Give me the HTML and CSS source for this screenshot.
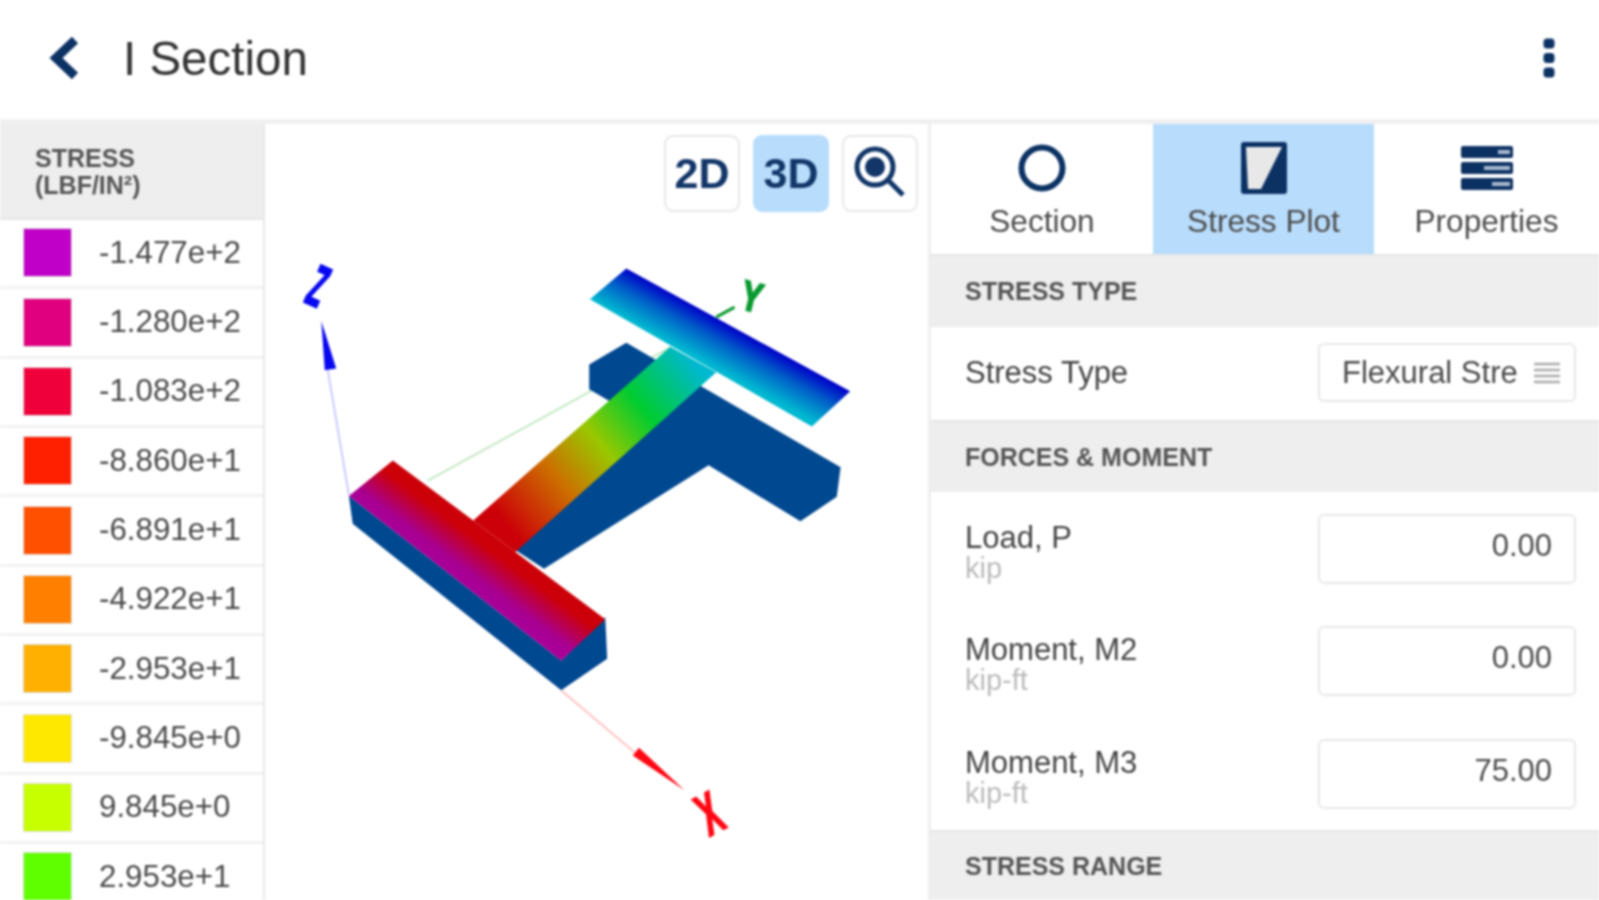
FILE: index.html
```html
<!DOCTYPE html>
<html lang="en">
<head>
<meta charset="utf-8">
<title>I Section</title>
<link rel="stylesheet" href="styles.css">
</head>
<body>
<div class="app">
  <header class="topbar">
    <svg class="back" viewBox="0 0 32 44"><path d="M26 4 L7 22 L26 40" /></svg>
    <h1 class="title">I Section</h1>
    <svg class="kebab" viewBox="0 0 14 40"><rect x="1.5" y="0.5" width="11" height="10" rx="3.5"/><rect x="1.5" y="15" width="11" height="10" rx="3.5"/><rect x="1.5" y="29.5" width="11" height="10" rx="3.5"/></svg>
  </header>
  <main class="body">
    <aside class="legend">
      <div class="legend-head">STRESS<br>(LBF/IN²)</div>
      <div class="legend-row"><span class="swatch c1"></span><span>-1.477e+2</span></div>
      <div class="legend-row"><span class="swatch c2"></span><span>-1.280e+2</span></div>
      <div class="legend-row"><span class="swatch c3"></span><span>-1.083e+2</span></div>
      <div class="legend-row"><span class="swatch c4"></span><span>-8.860e+1</span></div>
      <div class="legend-row"><span class="swatch c5"></span><span>-6.891e+1</span></div>
      <div class="legend-row"><span class="swatch c6"></span><span>-4.922e+1</span></div>
      <div class="legend-row"><span class="swatch c7"></span><span>-2.953e+1</span></div>
      <div class="legend-row"><span class="swatch c8"></span><span>-9.845e+0</span></div>
      <div class="legend-row"><span class="swatch c9"></span><span>9.845e+0</span></div>
      <div class="legend-row"><span class="swatch c10"></span><span>2.953e+1</span></div>
    </aside>
    <section class="stage">
      <div class="tools">
        <button class="tool">2D</button>
        <button class="tool active">3D</button>
        <button class="tool">
          <svg class="zoom-icon" viewBox="0 0 52 52"><circle cx="21" cy="21" r="18" class="ring"/><circle cx="21" cy="21" r="10" class="dot"/><path d="M33 33 L49 49" class="ring"/></svg>
        </button>
      </div>
      <svg class="model" viewBox="0 0 1568 1620" preserveAspectRatio="none">
        <defs>
          <linearGradient id="gFront" gradientUnits="userSpaceOnUse" x1="483" y1="866" x2="565" y2="753">
            <stop offset="0" stop-color="#a80098"/><stop offset=".2" stop-color="#a80090"/><stop offset=".75" stop-color="#cc0008"/>
          </linearGradient>
          <linearGradient id="gWeb" gradientUnits="userSpaceOnUse" x1="590" y1="720" x2="1080" y2="305">
            <stop offset="0" stop-color="#cc0008"/><stop offset=".28" stop-color="#cc7000"/><stop offset=".5" stop-color="#98c800"/><stop offset=".72" stop-color="#00cc30"/><stop offset="1" stop-color="#00b8d0"/>
          </linearGradient>
          <linearGradient id="gRear" gradientUnits="userSpaceOnUse" x1="1144" y1="326" x2="1197" y2="227">
            <stop offset="0" stop-color="#00b8d0"/><stop offset=".55" stop-color="#0060c8"/><stop offset="1" stop-color="#0000c8"/>
          </linearGradient>
        </defs>
        <path class="ax-z" d="M180 645 L125 330"/>
        <path class="ax-y" d="M385 610 L1020 272"/>
        <path class="ax-yd" d="M1140 195 L1188 170"/>
        <path class="ax-x" d="M735 1140 L930 1300"/>
        <polygon class="cone-z" points="108,205 117,330 147,325"/>
        <polygon class="cone-x" points="1056,1392 922,1305 938,1285"/>
        <text class="lbl lbl-z" transform="translate(60 155) rotate(24) scale(.52 1.15)">Z</text>
        <text class="lbl lbl-y" transform="translate(1198 172) rotate(14) scale(.8 1.05)">Y</text>
        <text class="lbl lbl-x" transform="translate(1122 1510) rotate(-27) scale(.62 1.15)">X</text>
        <polygon class="steel" points="808,315 905,260 1465,575 1455,650 1360,712 1120,570 690,832 615,785 865,410 808,378"/>
        <polygon class="steel" points="180,648 190,718 735,1140 855,1060 850,955 735,1065"/>
        <polygon fill="url(#gWeb)" points="505,710 1020,270 1140,335 615,790"/>
        <polygon fill="url(#gFront)" points="180,648 295,558 850,960 735,1065"/>
        <polygon fill="url(#gRear)" points="810,150 905,72 1490,383 1390,472"/>
      </svg>
    </section>
    <aside class="panel">
      <nav class="tabs">
        <div class="tab">
          <svg class="tab-icon" viewBox="0 0 54 54"><circle cx="27" cy="27" r="20.5" class="ic-ring"/></svg>
          <span>Section</span>
        </div>
        <div class="tab active">
          <svg class="tab-icon" viewBox="0 0 54 54"><rect x="4" y="1" width="46" height="52" rx="3" class="ic-fill"/><polygon points="9,6 45,6 24,48 11,48" class="ic-light"/></svg>
          <span>Stress Plot</span>
        </div>
        <div class="tab">
          <svg class="tab-icon" viewBox="0 0 54 54"><rect x="1" y="5" width="52" height="12" rx="2" class="ic-fill"/><rect x="1" y="21" width="52" height="12" rx="2" class="ic-fill"/><rect x="1" y="37" width="52" height="12" rx="2" class="ic-fill"/><rect x="38" y="9" width="12" height="4" class="ic-pale"/><rect x="24" y="25" width="26" height="4" class="ic-pale"/><rect x="32" y="41" width="18" height="4" class="ic-pale"/></svg>
          <span>Properties</span>
        </div>
      </nav>
      <div class="band b-type">STRESS TYPE</div>
      <div class="row row-type">
        <div class="row-label">Stress Type</div>
        <div class="field select"><span class="sel-text">Flexural Stre</span><svg class="sel-icon" viewBox="0 0 26 22"><path d="M0 2H26M0 8H26M0 14H26M0 20H26"/></svg></div>
      </div>
      <div class="band">FORCES &amp; MOMENT</div>
      <div class="row">
        <div class="row-label has-unit">Load, P<small>kip</small></div>
        <div class="field">0.00</div>
      </div>
      <div class="row">
        <div class="row-label has-unit">Moment, M2<small>kip-ft</small></div>
        <div class="field">0.00</div>
      </div>
      <div class="row">
        <div class="row-label has-unit">Moment, M3<small>kip-ft</small></div>
        <div class="field">75.00</div>
      </div>
      <div class="band">STRESS RANGE</div>
    </aside>
  </main>
</div>
</body>
</html>
```
FILE: styles.css
```css
* { box-sizing: border-box; }
html, body { margin: 0; height: 100%; overflow: hidden; background: #fff; }
body { font-family: "Liberation Sans", Arial, sans-serif; color: #444; }
.app { width: 1599px; height: 900px; display: flex; flex-direction: column; overflow: hidden; filter: blur(.8px); }

.topbar { height: 124px; flex: none; display: flex; align-items: center; border-bottom: 5px solid #f0f0f0; padding: 0 43px 3px 49px; }
.back { width: 32px; height: 44px; margin-right: 42px; }
.back path { fill: none; stroke: #0c3264; stroke-width: 9; }
.title { flex: 1; margin: 0; font-size: 47.5px; font-weight: 400; color: #333; }
.kebab { width: 14px; height: 40px; fill: #0c3264; }

.body { flex: 1; min-height: 0; display: flex; }

.legend { width: 265px; flex: none; border-right: 2px solid #e8e8e8; }
.legend-head { height: 96px; padding: 21px 0 0 35px; background: #eee; font-size: 25px; line-height: 27px; font-weight: 700; color: #555; border-bottom: 2px solid #e6e6e6; }
.legend-row { height: 69.35px; display: flex; align-items: center; padding: 0 0 1px 24px; gap: 28px; font-size: 31.3px; color: #4a4a4a; border-bottom: 3px solid #f2f2f2; }
.swatch { width: 47px; height: 47px; flex: none; box-shadow: 0 0 0 1px #ddd; }
.c1 { background: #c000c8; }
.c2 { background: #e0007f; }
.c3 { background: #f0003a; }
.c4 { background: #ff2000; }
.c5 { background: #ff5000; }
.c6 { background: #ff8000; }
.c7 { background: #ffb000; }
.c8 { background: #ffe800; }
.c9 { background: #c8ff00; }
.c10 { background: #60ff00; }

.stage { flex: 1; position: relative; min-width: 0; }
.tools { display: flex; justify-content: flex-end; gap: 13px; padding: 11px 10px 0 0; }
.tool { width: 76px; height: 77px; padding: 0; display: flex; align-items: center; justify-content: center; border: 2px solid #e8e8e8; border-radius: 9px; background: #fff; font: 700 43px "Liberation Sans", Arial, sans-serif; color: #123668; }
.tool.active { background: #b8dcfb; border-color: #b8dcfb; }
.zoom-icon { width: 52px; height: 52px; margin: -3px 0 0 -1px; }
.zoom-icon .ring { fill: none; stroke: #123668; stroke-width: 5; }
.zoom-icon .dot { fill: #123668; }

.model { position: absolute; left: 15px; top: 116px; width: 600px; height: 640px; }
.ax-z { stroke: #c8c8ff; stroke-width: 5; fill: none; }
.ax-y { stroke: #c4e8c4; stroke-width: 5; fill: none; }
.ax-yd { stroke: #0a9a30; stroke-width: 8; fill: none; }
.ax-x { stroke: #ffc4c4; stroke-width: 5; fill: none; }
.cone-z { fill: #0808f0; }
.cone-x { fill: #ff0814; }
.lbl { font: 700 130px "Liberation Sans", Arial, sans-serif; stroke-width: 5px; }
.lbl-z { fill: #0808f0; stroke: #0808f0; }
.lbl-y { fill: #0a9a30; stroke: #0a9a30; font-size: 100px; }
.lbl-x { fill: #ff0814; stroke: #ff0814; }
.steel { fill: #004890; }

.panel { width: 671px; flex: none; border-left: 3px solid #eee; }
.tabs { height: 130px; display: grid; grid-template-columns: 222px 221px 1fr; }
.tab { display: flex; flex-direction: column; align-items: center; padding-top: 17px; gap: 8px; font-size: 31.6px; color: #4c4c4c; }
.tab.active { background: #b8dcfb; }
.tab-icon { width: 54px; height: 54px; flex: none; }
.ic-ring { fill: none; stroke: #0c3264; stroke-width: 6; }
.ic-fill { fill: #0c3264; }
.ic-light { fill: #e8e8e8; }
.ic-pale { fill: #a8b8cc; }

.band { height: 72px; display: flex; align-items: center; padding-left: 34px; background: #eee; font-size: 25px; font-weight: 700; color: #555; border-top: 2px solid #e6e6e6; }
.b-type { height: 73px; }
.row { height: 112.5px; display: flex; align-items: center; justify-content: space-between; padding: 1px 23px 0 34px; }
.row-type { height: 93px; padding: 0 23px 2px 34px; }
.row-label { font-size: 31px; line-height: 31px; color: #444; }
.row-label.has-unit { padding-top: 8px; }
.row-label small { display: block; font-size: 29px; line-height: 31px; color: #bbb; }
.field { width: 258px; height: 70px; display: flex; align-items: center; justify-content: flex-end; padding: 0 22px 6px; border: 2px solid #e8e8e8; border-radius: 6px; font-size: 31px; color: #4a4a4a; }
.select { height: 59px; justify-content: space-between; padding: 0 14px 0 22px; }
.sel-text { white-space: nowrap; overflow: hidden; }
.sel-icon { width: 26px; height: 22px; flex: none; }
.sel-icon path { stroke: #aaa; stroke-width: 2.5; fill: none; }
```
